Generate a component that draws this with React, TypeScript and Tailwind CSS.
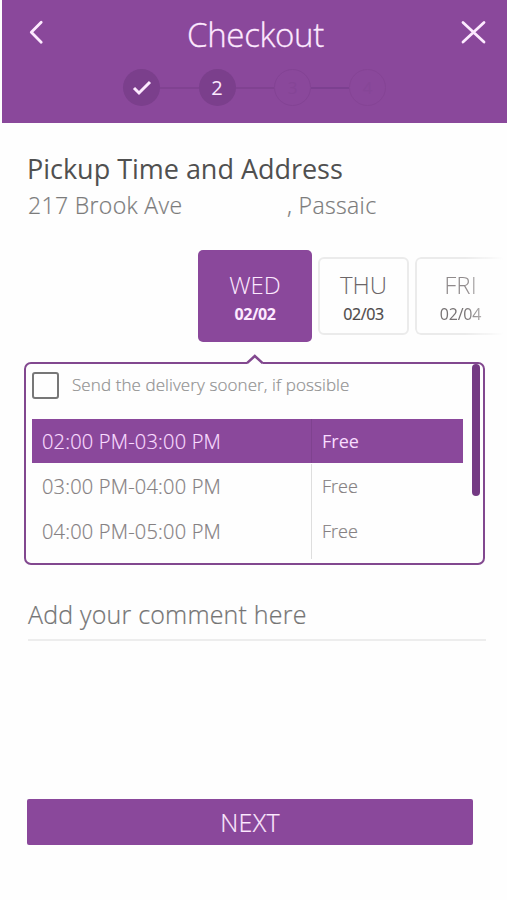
const slots = [
  { time: "02:00 PM-03:00 PM", price: "Free", selected: true },
  { time: "03:00 PM-04:00 PM", price: "Free", selected: false },
  { time: "04:00 PM-05:00 PM", price: "Free", selected: false },
];

function Header() {
  return (
    <header className="ml-[2px] h-[123px] bg-[#8a489b] text-[#fdeaff]">
      <div className="flex h-[69px] items-center justify-between pl-[25px] pr-[20px]">
        <button aria-label="Back" className="mb-[5px]">
          <svg width="18" height="26" viewBox="0 0 18 26" fill="none" stroke="currentColor" strokeWidth="2.8" strokeLinecap="round" strokeLinejoin="round">
            <path d="M14.200 3.300 4.300 13.300l9.900 10" />
          </svg>
        </button>
        <h1 className="pl-[6px] text-[33px] font-light leading-[68px] tracking-[-0.35px] [-webkit-text-stroke:0.3px_#fdeaff]">Checkout</h1>
        <button aria-label="Close" className="mb-[5px]">
          <svg width="27" height="26" viewBox="0 0 27 26" fill="none" stroke="currentColor" strokeWidth="2.8" strokeLinecap="round">
            <path d="m3 3.500 21 19.500M24 3.500l-21 19.500" />
          </svg>
        </button>
      </div>
      <div className="ml-[121px] flex h-[37px] items-center">
        <div className="flex size-[37px] items-center justify-center rounded-full bg-[#7b3f8c]">
          <svg width="20" height="18" viewBox="0 0 20 18" fill="none" stroke="currentColor" strokeWidth="3">
            <path d="m2 9 5 5L18 3" />
          </svg>
        </div>
        <div className="h-[2px] w-[39px] bg-[#804291]" />
        <div className="flex size-[37px] items-center justify-center rounded-full bg-[#7b3f8c] pr-px text-[20px] font-normal">2</div>
        <div className="h-[2px] w-[38px] bg-[#804291]" />
        <div className="flex size-[37px] items-center justify-center rounded-full border border-[#834394] text-[17px] text-[#854596]">3</div>
        <div className="h-[2px] w-[38px] bg-[#7c4090]" />
        <div className="flex size-[37px] items-center justify-center rounded-full border border-[#854495] text-[17px] text-[#864697]">4</div>
      </div>
    </header>
  );
}

export default function App() {
  return (
    <main className="h-[900px] w-[507px] overflow-hidden bg-[#fefefe] font-['Open_Sans',sans-serif]">
      <Header />

      <section className="h-[127px] pl-[27px] pt-[28px]">
        <h2 className="whitespace-nowrap text-[27px] font-normal leading-[36px] tracking-[-0.02px] text-[#505050]">Pickup Time and Address</h2>
        <div className="flex text-[23px] font-light leading-[36px] tracking-[0.35px] text-[#7b7b7b] [-webkit-text-stroke:0.2px_#7b7b7b]">
          <span className="w-[260px] pl-px">217 Brook Ave</span>
          <span>, Passaic</span>
        </div>
      </section>

      <div className="ml-[198px] flex h-[92px] items-center gap-[6px] overflow-hidden">
        <div className="flex h-[92px] w-[114px] shrink-0 flex-col items-center rounded-[5px] bg-[#8a489b] pt-[19px] text-[#fdeaff]">
          <span className="text-[24px] font-light leading-[32px]">WED</span>
          <span className="text-[16px] font-bold leading-[27px] tracking-[-0.4px]">02/02</span>
        </div>
        <div className="flex h-[78px] w-[91px] shrink-0 flex-col items-center rounded-[6px] border-2 border-[#ebebeb] pt-[10px]">
          <span className="text-[24px] font-light leading-[32px] text-[#6c6668]">THU</span>
          <span className="text-[16px] leading-[27px] tracking-[-0.35px] text-[#4c4849] [-webkit-text-stroke:0.2px_#4c4849]">02/03</span>
        </div>
        <div className="flex h-[78px] w-[91px] shrink-0 flex-col items-center rounded-[6px] border-2 border-[#ebebeb] pt-[10px] [mask-image:linear-gradient(to_right,black_55%,transparent_98%)]">
          <span className="text-[24px] font-light leading-[32px] text-[#8f8a8b]">FRI</span>
          <span className="text-[16px] leading-[27px] tracking-[-0.2px] text-[#777374]">02/04</span>
        </div>
      </div>

      <section className="relative ml-[24px] mt-[20px] h-[203px] w-[461px] rounded-[7px] border-[2.5px] border-[#82488f]">
        <svg className="absolute left-[218px] top-[-10px]" width="24" height="13" viewBox="0 0 24 13">
          <path d="M3 9.500 10.500 2 18.500 9.500V13H3z" fill="#fefefe" />
          <path d="M3 9.200 10.800 2 18.600 9.200" fill="none" stroke="#82488f" strokeWidth="2.500" />
        </svg>
        <div className="absolute right-[3px] top-0 h-[132px] w-[8px] rounded-full bg-[#743a83]" />
        <label className="flex h-[55px] items-start pl-[6px] pt-[8px]">
          <span className="size-[27px] rounded-[3px] border-[2.5px] border-[#777]" />
          <span className="ml-[13px] whitespace-nowrap text-[17px] font-light leading-[26px] tracking-[0.09px] text-[#929292] [-webkit-text-stroke:0.2px_#929292]">Send the delivery sooner, if possible</span>
        </label>
        <div className="ml-[6px] w-[431px]">
          {slots.map((s) => (
            <div key={s.time} className={`flex h-[45px] last:h-[50px] ${s.selected ? "text-[#f9dcff]" : "text-[#858082]"}`}>
              <span className={`w-[280px] whitespace-nowrap border-r pl-[10px] text-[20px] font-light leading-[45px] tracking-[0.2px] [-webkit-text-stroke:0.2px_currentColor] ${s.selected ? "h-[44px] border-[#7f428f] bg-[#8a489b]" : "border-[#dedede]"}`}>{s.time}</span>
              <span className={`flex-1 pl-[10px] text-[18px] leading-[45px] ${s.selected ? "h-[44px] bg-[#8a489b] font-normal" : "font-light [-webkit-text-stroke:0.2px_currentColor]"}`}>{s.price}</span>
            </div>
          ))}
        </div>
      </section>

      <div className="ml-[28px] mt-[27px] h-[49px] w-[458px] border-b-2 border-[#ededed] text-[25px] font-light leading-[44px] tracking-[0.2px] text-[#747474] [-webkit-text-stroke:0.2px_#747474]">
        Add your comment here
      </div>

      <button className="ml-[27px] mt-[158px] block h-[46px] w-[446px] rounded-[2px] bg-[#8a489b] text-[25px] font-light leading-[46px] tracking-[0.3px] text-[#fdeaff] [-webkit-text-stroke:0.2px_#fdeaff]">NEXT</button>
    </main>
  );
}
